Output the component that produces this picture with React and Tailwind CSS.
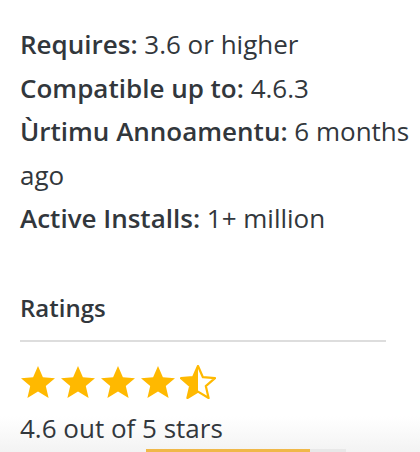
import React from 'react';

const STAR = 'M18 1 L22.9 12.2 L35 13.2 L25.8 21.1 L28.6 33 L18 26.6 L7.4 33 L10.2 21.1 L1 13.2 L13.1 12.2 Z';

const Star = ({ type }) => (
  <svg width="36" height="34" viewBox="0 0 36 34" className="shrink-0">
    <defs>
      <clipPath id="half-left">
        <rect x="0" y="0" width="18" height="34" />
      </clipPath>
    </defs>
    {type === 'full' && <path d={STAR} fill="#ffb900" />}
    {type === 'half' && (
      <>
        <path d={STAR} fill="none" stroke="#ffb900" strokeWidth="2.2" strokeLinejoin="round" />
        <path d={STAR} fill="#ffb900" clipPath="url(#half-left)" />
      </>
    )}
  </svg>
);

const META = [
  { label: 'Requires:', value: '3.6 or higher' },
  { label: 'Compatible up to:', value: '4.6.3' },
  { label: 'Ùrtimu Annoamentu:', value: '6 months ago' },
  { label: 'Active Installs:', value: '1+ million' },
];

export default function App() {
  return (
    <div className="w-[420px] h-[452px] overflow-hidden bg-white relative text-[#32373c]" style={{ fontFamily: '"Open Sans", sans-serif' }}>
      {/* faint fade behind the bottom of the panel */}
      <div className="absolute left-0 right-0 bottom-0 h-[36px] bg-gradient-to-b from-white to-[#f3f3f3]" />

      <div className="relative pl-[20px] pt-[23px]">
        <ul className="w-[394px] text-[26px] leading-[43.5px]">
          {META.map(m => (
            <li key={m.label}>
              <strong className="font-semibold">{m.label}</strong> {m.value}
            </li>
          ))}
        </ul>

        <h3 className="mt-[51px] w-[366px] pb-[16px] border-b-2 border-[#dddddd] text-[24px] font-semibold leading-[32px]">Ratings</h3>

        <div className="mt-[23px] flex gap-[4px]">
          <Star type="full" />
          <Star type="full" />
          <Star type="full" />
          <Star type="full" />
          <Star type="half" />
        </div>
        <p className="mt-[13px] text-[26px] leading-[32px]">4.6 out of 5 stars</p>
      </div>

      <div className="absolute left-[146px] bottom-0 h-[3px] w-[200px] flex">
        <div className="w-[164px] bg-[#f0b849]" />
        <div className="flex-1 bg-[#e8e8e8]" />
      </div>
    </div>
  );
}
